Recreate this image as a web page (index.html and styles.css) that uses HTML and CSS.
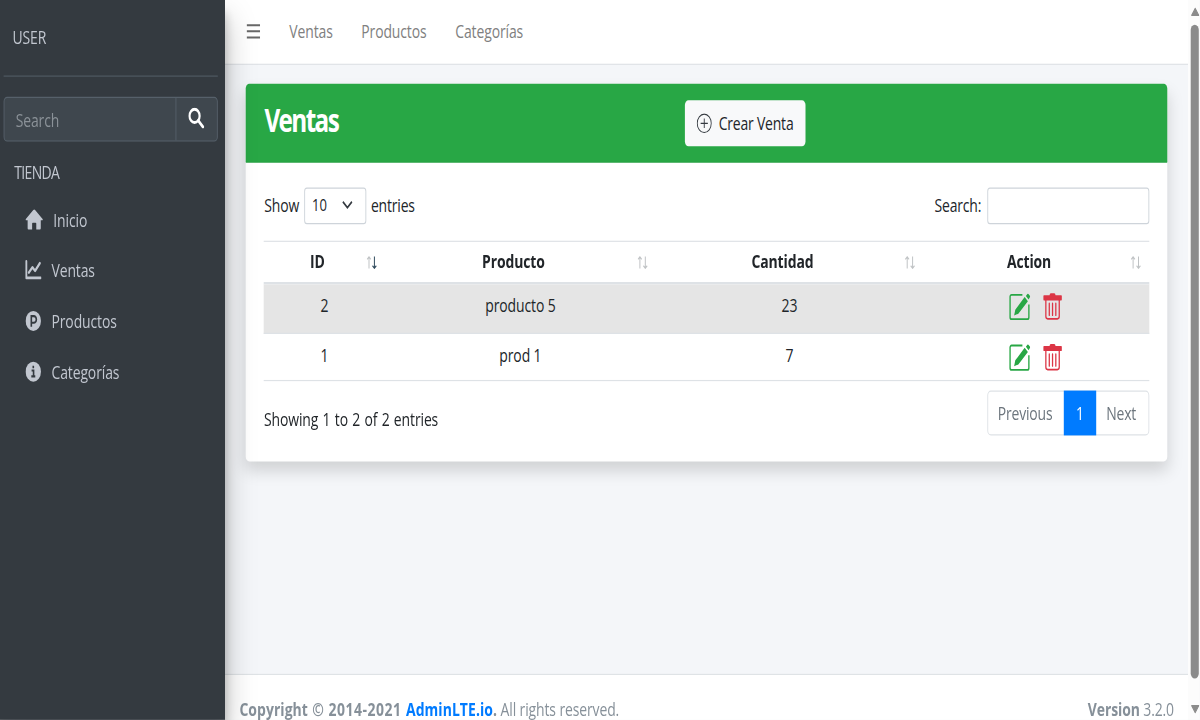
FILE: index.html
```
<!DOCTYPE html>
<html lang="es">
<head>
<meta charset="utf-8">
<title>Ventas</title>
<link rel="stylesheet" href="styles.css">
</head>
<body>
<svg class="defs" width="0" height="0">
  <symbol id="edit" viewBox="0 0 24 24"><path d="M15 1.8H3A1.7 1.7 0 0 0 1.3 3.5v17.3A1.7 1.7 0 0 0 3 22.5h17.5a1.7 1.7 0 0 0 1.700-1.700V10" fill="none" stroke="currentColor" stroke-width="1.5"/><path d="M17.500 3.700l3.600 3.500L10.500 17.800 5.800 19.400l1.300-5zM18.900 2.800l1.600-1.700q.6-.5 1.200 0l1.600 1.600q.5.6 0 1.200L21.900 5.900z" fill="currentColor"/></symbol>
  <symbol id="trash" viewBox="0 0 22 24"><path d="M1 1.700h6.500q.3-1.700 1.500-1.700h4q1.200 0 1.500 1.700H21q.8 0 .8.800v3q0 .8-.8.800H1q-.8 0-.8-.800v-3Q.2 1.700 1 1.700z" fill="currentColor"/><path d="M3.200 5v15.500q0 2.200 2.200 2.200h11.200q2.200 0 2.200-2.200V5M7.200 9v10.500M11 9v10.500M14.800 9v10.500" fill="none" stroke="currentColor" stroke-width="1.500" stroke-linecap="round"/></symbol>
  <symbol id="up" viewBox="0 0 6 13"><path d="M3 12.500V1M.5 3.300L3 .8l2.500 2.500" fill="none" stroke="currentColor" stroke-width="1.300"/></symbol>
  <symbol id="down" viewBox="0 0 6 13"><path d="M3 .5V12M.5 9.700L3 12.200l2.500-2.500" fill="none" stroke="currentColor" stroke-width="1.300"/></symbol>
</svg>
<div class="frame">
<div class="app">
  <aside class="sidebar">
    <div class="user">USER</div>
    <div class="side-search">
      <span class="side-input">Search</span>
      <span class="side-btn"><svg width="18" height="18" viewBox="0 0 18 18"><circle cx="7.200" cy="7.200" r="5.600" fill="none" stroke="#fff" stroke-width="2.400"/><path d="M11.300 11.300l5.200 5.200" stroke="#fff" stroke-width="2.700" stroke-linecap="round"/></svg></span>
    </div>
    <div class="section">TIENDA</div>
    <nav class="menu">
      <a class="home"><svg width="20" height="18" viewBox="0 0 20 18"><path d="M10 .5q.6 0 1 .400L19.300 8.500q.5.600 0 1.100H17.300V16.500q0 1-1 1H12.300V12.500q0-.8-.8-.8H8.500q-.8 0-.8.800v5H3.700q-1 0-1-1V9.600H.7q-.5-.5 0-1.100L9 .9q.4-.4 1-.4z"/></svg><span>Inicio</span></a>
      <a><svg width="18" height="18" viewBox="0 0 18 18"><path d="M1.200 1.500v14h16" class="line"/><path d="M4 11L8 6.500l3 3L16.300 3" class="line"/></svg><span>Ventas</span></a>
      <a><svg width="18" height="18" viewBox="0 0 18 18"><circle cx="9" cy="9" r="8.500"/><path d="M6.800 14V4.900h2.800a2.800 2.800 0 0 1 0 5.600H6.800" class="cut"/></svg><span>Productos</span></a>
      <a><svg width="18" height="18" viewBox="0 0 18 18"><circle cx="9" cy="9" r="8.500"/><path d="M7.100 8h2.200v4.800M6.800 13h4.400M9 4v2" class="cut"/></svg><span>Categorías</span></a>
    </nav>
  </aside>
  <div class="main">
    <header class="navbar">
      <svg width="15" height="13" viewBox="0 0 15 13"><path d="M0 1.300h15M0 6.500h15M0 11.700h15" stroke="#686868" stroke-width="1.700"/></svg>
      <a class="n1">Ventas</a><a class="n2">Productos</a><a>Categorías</a>
    </header>
    <main class="content">
      <section class="card">
        <div class="card-head">
          <h1>Ventas</h1>
          <span class="create"><svg width="17" height="17" viewBox="0 0 17 17"><path d="M8.500 4.500v8M4.500 8.500h8" stroke="#343a40"/><circle cx="8.500" cy="8.500" r="7.800" fill="none" stroke="#343a40"/></svg><span>Crear Venta</span></span>
        </div>
        <div class="card-body">
          <div class="tools">
            <span class="show">Show</span>
            <span class="select"><span>10</span><svg width="12" height="8" viewBox="0 0 12 8"><path d="M1 1l5 5 5-5" fill="none" stroke="#343a40" stroke-width="1.700"/></svg></span>
            <span class="entries">entries</span>
            <span class="find">Search:</span><span class="find-input"></span>
          </div>
          <div class="table">
            <div class="row head">
              <div>ID<span class="sort"><svg width="6" height="11"><use href="#up"/></svg><svg class="on" width="6" height="11"><use href="#down"/></svg></span></div>
              <div>Producto<span class="sort"><svg width="6" height="11"><use href="#up"/></svg><svg width="6" height="11"><use href="#down"/></svg></span></div>
              <div>Cantidad<span class="sort"><svg width="6" height="11"><use href="#up"/></svg><svg width="6" height="11"><use href="#down"/></svg></span></div>
              <div>Action<span class="sort"><svg width="6" height="11"><use href="#up"/></svg><svg width="6" height="11"><use href="#down"/></svg></span></div>
            </div>
            <div class="row odd"><div>2</div><div>producto 5</div><div>23</div><div class="acts"><svg class="edit" width="24" height="24"><use href="#edit"/></svg><svg class="trash" width="21" height="24"><use href="#trash"/></svg></div></div>
            <div class="row even"><div>1</div><div>prod 1</div><div>7</div><div class="acts"><svg class="edit" width="24" height="24"><use href="#edit"/></svg><svg class="trash" width="21" height="24"><use href="#trash"/></svg></div></div>
          </div>
          <div class="bottom">
            <span class="info">Showing 1 to 2 of 2 entries</span>
            <div class="pages"><span class="prev">Previous</span><span class="cur">1</span><span class="next">Next</span></div>
          </div>
        </div>
      </section>
    </main>
    <footer class="footer"><div><b class="copy">Copyright © <span class="years">2014-2021</span> <a>AdminLTE.io</a>.</b> <span>All rights reserved.</span></div><div><b>Version</b> <span>3.2.0</span></div></footer>
  </div>
  <div class="scroll">
    <svg width="10" height="8" viewBox="0 0 10 8"><path d="M5 1L9 7H1z" fill="#8b8b8b" stroke="#8b8b8b" stroke-linejoin="round"/></svg>
    <div class="thumb"></div>
    <svg width="10" height="8" viewBox="0 0 10 8"><path d="M5 7L1 1h8z" fill="#8b8b8b" stroke="#8b8b8b" stroke-linejoin="round"/></svg>
  </div>
</div>
</div>
</body>
</html>
```
FILE: styles.css
```
* { box-sizing: border-box; }
html, body { margin: 0; height: 720px; overflow: hidden; }
svg { display: block; flex: none; }
.defs { position: absolute; }
.frame { width: 1200px; height: 720px; overflow: hidden; background: #343a40; }

/* The interface is laid out at 1333 x 611 and stretched to the window. */
.app {
  display: flex;
  width: 1333.33px;
  height: 610.17px;
  transform: scale(.9, 1.18);
  transform-origin: 0 0;
  font: 15.5px/24px "Open Sans", "Noto Sans", sans-serif;
  letter-spacing: -.12px;
  color: #212529;
  background: #f4f6f9;
}

.sidebar {
  position: relative;
  z-index: 2;
  flex: none;
  width: 250px;
  padding: 0 8.500px 0 4.400px;
  background: #343a40;
  color: #c2c7d0;
  box-shadow: 0 14px 28px rgba(0,0,0,.25), 0 10px 10px rgba(0,0,0,.22);
}
.user { height: 65px; padding: 19px 0 0 9.500px; border-bottom: 1px solid #4f5962; }
.side-search {
  display: flex;
  height: 38px;
  margin-top: 16.600px;
  border: 1px solid #56606a;
  border-radius: 4px;
  background: #3f474e;
}
.side-input { flex: 1; padding: 7.500px 12px; line-height: 24px; color: #8b9298; }
.side-btn { display: flex; width: 46px; align-items: center; justify-content: center; border-left: 1px solid #56606a; }
.side-btn svg { margin-top: -1px; }
.section { margin: 14.500px 0 0 11.500px; letter-spacing: -.7px; }
.menu { padding: 6.400px 0 0 23.500px; }
.menu a { display: flex; height: 43.150px; align-items: center; gap: 11.300px; }
.menu svg { fill: #c2c7d0; }
.menu .line { fill: none; stroke: #c2c7d0; stroke-width: 2.200; stroke-linecap: round; stroke-linejoin: round; }
.menu .cut { fill: none; stroke: #343a40; stroke-width: 1.800; }

.main { flex: 1; display: flex; flex-direction: column; min-width: 0; }
.navbar {
  display: flex;
  flex: none;
  align-items: center;
  height: 55px;
  padding: 0 0 2px 24.400px;
  border-bottom: 1px solid #dee2e6;
  background: #fff;
  color: #808080;
}
.n1 { width: 80px; margin-left: 32px; }
.n2 { width: 104.500px; }
.content { flex: 1; padding: 16.200px 23.300px 0; }

.card { height: 320.300px; border-radius: 4px; background: #fff; box-shadow: 0 8px 16px rgba(0,0,0,.15); }
.card-head {
  display: flex;
  height: 67.100px;
  padding: 14px 20px 0;
  border-radius: 4px 4px 0 0;
  border-bottom: 1px solid #1f9a3c;
  background: #28a745;
}
h1 { width: 467.700px; margin: 0; padding-left: .5px; font-size: 27px; line-height: 34px; font-weight: 700; letter-spacing: -1.800px; color: #fff; }
.create {
  display: flex;
  width: 134px;
  height: 38.500px;
  align-items: center;
  gap: 7.500px;
  padding-left: 13px;
  border-radius: 4px;
  background: #f8f9fa;
  letter-spacing: -.2px;
}
.card-body { padding: 20.500px 20px 0; }
.tools { display: flex; height: 31px; align-items: center; letter-spacing: -.2px; }
.show { width: 44.500px; padding-left: .4px; }
.select {
  display: flex;
  width: 69.400px;
  height: 31px;
  align-items: center;
  justify-content: space-between;
  padding: 0 14px 0 8px;
  border: 1px solid #ced4da;
  border-radius: 3px;
  font-size: 14.500px;
}
.entries { margin-left: 5px; }
.find { margin-left: auto; width: 58.300px; white-space: nowrap; }
.find-input { width: 180px; height: 31px; border: 1px solid #ced4da; border-radius: 3px; }

.table { margin-top: 14px; border-top: 1px solid #dee2e6; border-bottom: 1px solid #dee2e6; }
.row { display: grid; grid-template-columns: 134.400px 301.100px 296.700px 1fr; text-align: center; }
.head { height: 36px; border-bottom: 2px solid #dee2e6; font-weight: 700; }
.head > div { position: relative; padding: 4.500px 15.500px 0 0; }
.sort { position: absolute; right: 8.500px; top: 12px; display: flex; color: #bfc2c4; }
.sort .on { color: #2f4a5c; }
.odd { height: 42.400px; background: #e5e5e5; border-bottom: 1px solid #dee2e6; }
.even { height: 39.200px; }
.odd > div { padding-top: 5.300px; }
.even > div { padding-top: 5.500px; }
.row .acts { display: flex; justify-content: center; gap: 14px; padding: 7.500px 1px 0 0; }
.row.even .acts { padding-top: 7.500px; }
.edit { color: #28a745; }
.trash { color: #dc3545; }

.bottom { display: flex; justify-content: space-between; padding-top: 7.500px; }
.info { padding-top: 12.500px; word-spacing: .9px; }
.pages { display: flex; width: 180px; height: 38px; border: 1px solid #dee2e6; border-radius: 4px; color: #6c757d; letter-spacing: -.2px; }
.pages span { line-height: 37px; text-align: center; }
.prev { width: 84.500px; padding-right: 2px; }
.pages .cur { width: 35.500px; height: 38px; margin-top: -1px; line-height: 39px; background: #007bff; color: #fff; }
.next { flex: 1; padding-right: 2px; }

.footer {
  display: flex;
  flex: none;
  justify-content: space-between;
  height: 39px;
  padding: 16.500px 15.600px 0 16px;
  border-top: 1px solid #dee2e6;
  background: #fff;
  color: #869099;
  white-space: nowrap;
}
.footer a { color: #007bff; }
.copy { letter-spacing: .07px; word-spacing: .8px; }
.years { letter-spacing: .6px; }
.scroll { flex: none; display: flex; flex-direction: column; align-items: center; width: 13.300px; padding: 5.500px 0 5px 2px; background: #fcfcfc; }
.scroll svg:last-child { margin-top: auto; }
.thumb { flex: none; width: 8.900px; height: 554px; margin-top: 7.700px; border-radius: 5px; background: #8b8b8b; }
```
